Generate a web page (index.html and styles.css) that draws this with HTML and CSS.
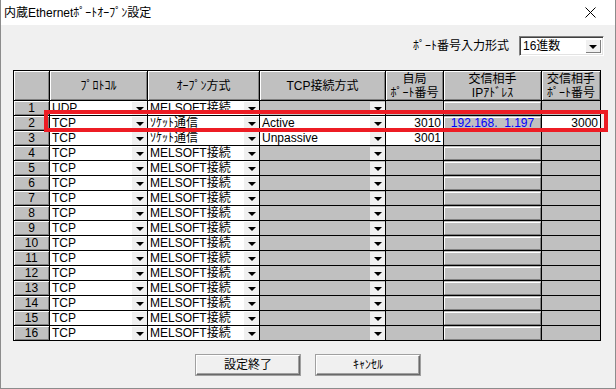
FILE: index.html
```html
<!DOCTYPE html>
<html lang="ja">
<head>
    <meta charset="UTF-8">
    <meta name="viewport" content="width=device-width, initial-scale=1.0">
    <title>内蔵Ethernetﾎﾟｰﾄｵｰﾌﾟﾝ設定</title>
    <link rel="stylesheet" href="styles.css">
</head>
<body>
    <div class="window">
        <div class="titlebar">
            <span class="title">内蔵Ethernetﾎﾟｰﾄｵｰﾌﾟﾝ設定</span>
            <svg class="close" width="11" height="11" viewBox="0 0 11 11">
                <path d="M0.5 0.5L10.5 10.5M10.5 0.5L0.5 10.5" stroke="#000" stroke-width="1" fill="none"/>
            </svg>
        </div>
        <div class="content">
            <div class="format-row">
                <span class="format-label">ﾎﾟｰﾄ番号入力形式</span>
                <div class="combo">
                    <span class="combo-value">16進数</span>
                    <span class="combo-btn"><i class="arrow"></i></span>
                </div>
            </div>

            <table class="grid">
                <colgroup>
                    <col style="width: 35px">
                    <col style="width: 97px">
                    <col style="width: 111px">
                    <col style="width: 125px">
                    <col style="width: 57px">
                    <col style="width: 97px">
                    <col style="width: 58px">
                </colgroup>
                <thead>
                    <tr>
                        <th></th>
                        <th>ﾌﾟﾛﾄｺﾙ</th>
                        <th>ｵｰﾌﾟﾝ方式</th>
                        <th>TCP接続方式</th>
                        <th><div class="two-line"><span>自局</span><span>ﾎﾟｰﾄ番号</span></div></th>
                        <th><div class="two-line"><span>交信相手</span><span>IPｱﾄﾞﾚｽ</span></div></th>
                        <th><div class="two-line"><span>交信相手</span><span>ﾎﾟｰﾄ番号</span></div></th>
                    </tr>
                </thead>
                <tbody id="rows">
                    <!-- 行はスクリプトで追加 -->
                </tbody>
            </table>

            <div class="buttons">
                <button class="btn">設定終了</button>
                <button class="btn">ｷｬﾝｾﾙ</button>
            </div>
        </div>
        <div class="highlight"></div>
    </div>

    <script>
        const tbody = document.getElementById('rows');

        const rows = [
            { proto: 'UDP', open: 'MELSOFT接続' },
            { proto: 'TCP', open: 'ｿｹｯﾄ通信', tcp: 'Active', own: '3010', ip: '192.168.  1.197', port: '3000' },
            { proto: 'TCP', open: 'ｿｹｯﾄ通信', tcp: 'Unpassive', own: '3001', noIp: true }
        ];
        for (let i = 4; i <= 16; i++) {
            rows.push({ proto: 'TCP', open: 'MELSOFT接続' });
        }

        const drop = '<span class="drop"><i class="arrow"></i></span>';

        function comboCell(value) {
            if (value === undefined) {
                return `<td class="gray"><div class="cell-combo"><span class="val"></span>${drop}</div></td>`;
            }
            return `<td class="white"><div class="cell-combo"><span class="val">${value}</span>${drop}</div></td>`;
        }

        function portCell(value) {
            if (value === undefined) return '<td class="gray"></td>';
            return `<td class="white"><div class="num-val">${value}</div></td>`;
        }

        function ipCell(row) {
            if (row.noIp) return '<td class="gray"></td>';
            return `<td class="gray"><div class="ipbox">${row.ip || ''}</div></td>`;
        }

        rows.forEach((row, index) => {
            const tr = document.createElement('tr');
            tr.innerHTML = `
                <td class="rownum">${index + 1}</td>
                ${comboCell(row.proto)}
                ${comboCell(row.open)}
                ${comboCell(row.tcp)}
                ${portCell(row.own)}
                ${ipCell(row)}
                ${portCell(row.port)}
            `;
            tbody.appendChild(tr);
        });
    </script>
</body>
</html>
```

FILE: styles.css
```css
* {
    box-sizing: border-box;
}

body {
    margin: 0;
    font-family: "Liberation Sans", "Noto Sans CJK JP", sans-serif;
    font-size: 12px;
    color: #000;
    background: #f0f0f0;
}

.window {
    position: relative;
    width: 616px;
    height: 389px;
    display: flex;
    flex-direction: column;
    background: #f0f0f0;
    border: 1px solid #8c8c8c;
    border-top: none;
}

.titlebar {
    height: 25px;
    display: flex;
    align-items: center;
    justify-content: space-between;
    padding: 0 19px 0 3px;
    background: #fff;
}

.title {
    line-height: 16px;
}

.content {
    flex: 1;
    display: flex;
    flex-direction: column;
}

.format-row {
    display: flex;
    justify-content: flex-end;
    align-items: center;
    gap: 10px;
    margin-top: 11px;
    padding-right: 11px;
}

.format-label {
    line-height: 16px;
}

.combo {
    width: 85px;
    height: 20px;
    display: flex;
    background: #fff;
    border: 1px solid;
    border-color: #808080 #fff #fff #808080;
    box-shadow: inset 1px 1px #404040, inset -1px -1px #e3e3e3;
    padding: 2px;
}

.combo-value {
    flex: 1;
    line-height: 14px;
    padding-left: 1px;
}

.combo-btn {
    width: 16px;
    display: flex;
    align-items: center;
    justify-content: center;
    background: #f0f0f0;
    box-shadow: inset 1px 1px #fff, inset -1px -1px #808080;
}

.arrow {
    width: 0;
    height: 0;
    border-left: 4px solid transparent;
    border-right: 4px solid transparent;
    border-top: 4px solid #000;
    margin-top: 1px;
}

.grid {
    width: 588px;
    table-layout: fixed;
    border-collapse: separate;
    border-spacing: 1px;
    background: #000;
    margin: 14px 0 0 12px;
}

.grid th {
    height: 29px;
    padding: 0;
    font-weight: normal;
    font-size: 12px;
    line-height: 14px;
    text-align: center;
    white-space: nowrap;
    background: #c0c0c0;
    box-shadow: inset 1px 1px #fff, inset -1px -1px #808080;
}

.two-line {
    display: flex;
    flex-direction: column;
    align-items: center;
}

.two-line span {
    height: 14px;
    line-height: 14px;
}

.grid td {
    height: 14px;
    padding: 0;
    line-height: 14px;
    white-space: nowrap;
}

.gray {
    background: #c0c0c0;
}

.white {
    background: #fff;
}

.rownum {
    background: #c0c0c0;
    box-shadow: inset 1px 1px #fff, inset -1px -1px #808080;
    text-align: center;
}

.cell-combo {
    height: 14px;
    display: flex;
}

.cell-combo .val {
    flex: 1;
    padding-left: 2px;
}

.drop {
    width: 15px;
    height: 13px;
    margin-top: 1px;
    display: flex;
    align-items: center;
    justify-content: center;
    background: #f0f0f0;
}

.num-val {
    text-align: right;
    padding-right: 2px;
}

.ipbox {
    height: 13px;
    margin-top: 1px;
    line-height: 11px;
    text-align: center;
    white-space: pre;
    color: #0000ff;
    background: #c0c0c0;
    border: 1px solid;
    border-color: #fff #808080 #808080 #fff;
}

.buttons {
    display: flex;
    justify-content: center;
    gap: 16px;
    margin-top: 14px;
}

.btn {
    width: 104px;
    height: 20px;
    padding: 0;
    font-family: inherit;
    font-size: 12px;
    line-height: 16px;
    background: #f0f0f0;
    border: 1px solid;
    border-color: #fff #696969 #696969 #fff;
    box-shadow: inset -1px -1px #a0a0a0;
    outline: 1px solid #a0a0a0;
}

.highlight {
    position: absolute;
    left: 43px;
    top: 110px;
    width: 564px;
    height: 22px;
    border: 4px solid #ed1c24;
}
```
